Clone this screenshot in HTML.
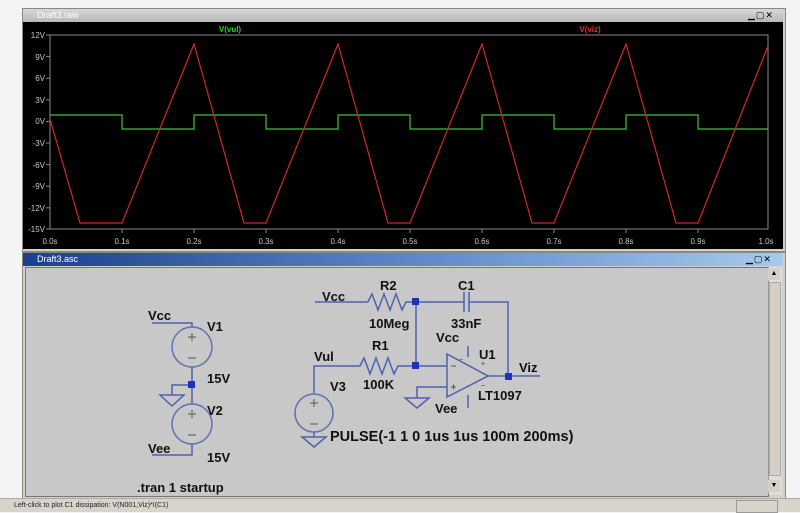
<!DOCTYPE html>
<html><head><style>
body{margin:0;width:800px;height:512px;background:#f4f4f4;position:relative;overflow:hidden;font-family:"Liberation Sans",sans-serif}
.a{position:absolute}
</style></head><body>
<div class="a" style="left:22px;top:8px;width:762px;height:242px;background:#d4d0c8;border:1px solid #888"></div>
<div class="a" style="left:23px;top:9px;width:760px;height:13px;background:linear-gradient(#d8d8d8,#b8b8b8);font-size:9px;color:#fff;line-height:13px;padding-left:14px;box-sizing:border-box">Draft3.raw</div>
<div class="a" style="left:748px;top:10px;width:34px;height:11px;font-size:9px;line-height:11px;color:#000;letter-spacing:1px">▁▢✕</div>
<svg class="a" style="left:23px;top:22px" width="760" height="227" viewBox="23 22 760 227">
<rect x="23" y="22" width="760" height="227" fill="#000"/>
<rect x="50" y="35" width="718" height="194" fill="none" stroke="#8a8a8a" stroke-width="1"/>
<g stroke="#8a8a8a"><line x1="46" y1="35" x2="50" y2="35"/><line x1="46" y1="56.6" x2="50" y2="56.6"/><line x1="46" y1="78.2" x2="50" y2="78.2"/><line x1="46" y1="99.8" x2="50" y2="99.8"/><line x1="46" y1="121.4" x2="50" y2="121.4"/><line x1="46" y1="143" x2="50" y2="143"/><line x1="46" y1="164.6" x2="50" y2="164.6"/><line x1="46" y1="186.2" x2="50" y2="186.2"/><line x1="46" y1="207.8" x2="50" y2="207.8"/><line x1="46" y1="229" x2="50" y2="229"/></g>
<g fill="#c8c8c8" font-size="8" text-anchor="end" font-family="Liberation Sans"><text x="45" y="38">12V</text><text x="45" y="60">9V</text><text x="45" y="81">6V</text><text x="45" y="103">3V</text><text x="45" y="124">0V</text><text x="45" y="146">-3V</text><text x="45" y="168">-6V</text><text x="45" y="189">-9V</text><text x="45" y="211">-12V</text><text x="45" y="232">-15V</text></g>
<g fill="#c8c8c8" font-size="8" text-anchor="middle" font-family="Liberation Sans"><text x="50" y="244">0.0s</text><text x="122" y="244">0.1s</text><text x="194" y="244">0.2s</text><text x="266" y="244">0.3s</text><text x="338" y="244">0.4s</text><text x="410" y="244">0.5s</text><text x="482" y="244">0.6s</text><text x="554" y="244">0.7s</text><text x="626" y="244">0.8s</text><text x="698" y="244">0.9s</text><text x="766" y="244">1.0s</text></g>
<g stroke="#8a8a8a"><line x1="122" y1="229" x2="122" y2="233"/><line x1="194" y1="229" x2="194" y2="233"/><line x1="266" y1="229" x2="266" y2="233"/><line x1="338" y1="229" x2="338" y2="233"/><line x1="410" y1="229" x2="410" y2="233"/><line x1="482" y1="229" x2="482" y2="233"/><line x1="554" y1="229" x2="554" y2="233"/><line x1="626" y1="229" x2="626" y2="233"/><line x1="698" y1="229" x2="698" y2="233"/></g>
<text x="230" y="32" fill="#2ecc2e" font-size="8" font-weight="bold" text-anchor="middle">V(vul)</text>
<text x="590" y="32" fill="#e03030" font-size="8" font-weight="bold" text-anchor="middle">V(viz)</text>
<polyline fill="none" stroke="#3cc43c" stroke-width="1.2" points="50,115 122,115 122,129 194,129 194,115 266,115 266,129 338,129 338,115 410,115 410,129 482,129 482,115 554,115 554,129 626,129 626,115 698,115 698,129 768,129"/>
<polyline fill="none" stroke="#d02828" stroke-width="1.2" points="50,119 80,223 122,223 194,44 244,223 266,223 338,44 388,223 410,223 482,44 532,223 554,223 626,44 676,223 698,223 768,46"/>
</svg>
<div class="a" style="left:22px;top:252px;width:762px;height:246px;background:#d4d0c8;border:1px solid #888"></div>
<div class="a" style="left:23px;top:253px;width:760px;height:13px;background:linear-gradient(90deg,#1c3f8c,#5b86c8 50%,#a8c8ec);font-size:9px;color:#fff;line-height:13px;padding-left:14px;box-sizing:border-box">Draft3.asc</div>
<div class="a" style="left:746px;top:254px;width:36px;height:11px;font-size:9px;line-height:11px;color:#000;letter-spacing:1px">▁▢✕</div>
<div class="a" style="left:25px;top:267px;width:742px;height:228px;background:#c8c8c8;border:1px solid #777"></div>
<div class="a" style="left:768px;top:267px;width:13px;height:228px;background:#e0ded8;border-left:1px solid #999"></div>
<div class="a" style="left:768px;top:268px;width:12px;height:12px;background:#d4d0c8;font-size:7px;text-align:center;line-height:12px">▲</div>
<div class="a" style="left:768px;top:480px;width:12px;height:12px;background:#d4d0c8;font-size:7px;text-align:center;line-height:12px">▼</div>
<div class="a" style="left:769px;top:282px;width:10px;height:192px;background:#d4d0c8;border:1px solid #aaa"></div>
<svg class="a" style="left:0;top:0" width="800" height="512">
<g stroke="#5060b0" stroke-width="1.5" fill="none">
<polyline points="152,323 192,323 192,327"/>
<circle cx="192" cy="347" r="20" stroke="#6070b0"/>
<line x1="192" y1="367" x2="192" y2="404"/>
<polyline points="192,385 172,385 172,395"/>
<polygon points="160,395 184,395 172,406"/>
<circle cx="192" cy="424" r="20" stroke="#6070b0"/>
<polyline points="192,444 192,455 152,455"/>
<line x1="315" y1="302" x2="368" y2="302"/>
<polyline points="368,302 372,294 378,310 384,294 390,310 396,294 402,310 406,302 416,302 464,302"/>
<line x1="464" y1="292" x2="464" y2="312"/><line x1="469" y1="292" x2="469" y2="312"/>
<polyline points="469,302 508,302 508,376"/>
<line x1="416" y1="302" x2="416" y2="365"/>
<polyline points="314,393 314,366 360,366 364,358 370,374 376,358 382,374 388,358 394,374 398,366 447,366"/>
<polygon points="447,354 447,397 488,376"/>
<line x1="488" y1="376" x2="540" y2="376"/>
<polyline points="468,346 468,357"/><polyline points="468,395 468,408"/>
<polyline points="447,387 417,387 417,398"/>
<polygon points="405,398 429,398 417,408"/>
<circle cx="314" cy="413" r="19" stroke="#6070b0"/>
<line x1="314" y1="432" x2="314" y2="437"/>
<polygon points="302,437 326,437 314,447"/>
</g>
<g fill="#2030c0"><rect x="188" y="381" width="7" height="7"/><rect x="412" y="298" width="7" height="7"/><rect x="412" y="362" width="7" height="7"/><rect x="505" y="373" width="7" height="7"/></g>
<g stroke="#555" stroke-width="1" fill="none"><path d="M188,337h8M192,333v8M188,358h8M188,414h8M192,410v8M188,435h8M310,403h8M314,399v8M310,424h8M451,366h5M451,387h5M453.5,384.5v5"/></g>
<g font-family="Liberation Sans" font-weight="bold" font-size="13" fill="#111">
<text x="148" y="320">Vcc</text><text x="207" y="331">V1</text><text x="207" y="383">15V</text><text x="207" y="415">V2</text><text x="148" y="453">Vee</text><text x="207" y="462">15V</text>
<text x="137" y="492">.tran 1 startup</text>
<text x="322" y="301">Vcc</text><text x="380" y="290">R2</text><text x="458" y="290">C1</text><text x="369" y="328">10Meg</text><text x="451" y="328">33nF</text>
<text x="436" y="342">Vcc</text><text x="372" y="350">R1</text><text x="314" y="361">Vul</text><text x="479" y="359">U1</text><text x="519" y="372">Viz</text>
<text x="330" y="391">V3</text><text x="363" y="389">100K</text><text x="478" y="400">LT1097</text><text x="435" y="413">Vee</text>
<text x="330" y="441" font-size="14.5">PULSE(-1 1 0 1us 1us 100m 200ms)</text>
</g>
<g font-size="7" fill="#333" font-family="Liberation Sans"><text x="459" y="362">−</text><text x="481" y="366">+</text><text x="481" y="388">−</text></g>
</svg>
<div class="a" style="left:0;top:498px;width:800px;height:14px;background:#d8d4cc;border-top:1px solid #aaa;font-size:7px;line-height:14px;padding-left:14px;box-sizing:border-box;color:#222">Left-click to plot C1 dissipation: V(N001,Viz)*I(C1)</div>
<div class="a" style="left:736px;top:500px;width:40px;height:11px;border:1px solid #999"></div>
</body></html>
